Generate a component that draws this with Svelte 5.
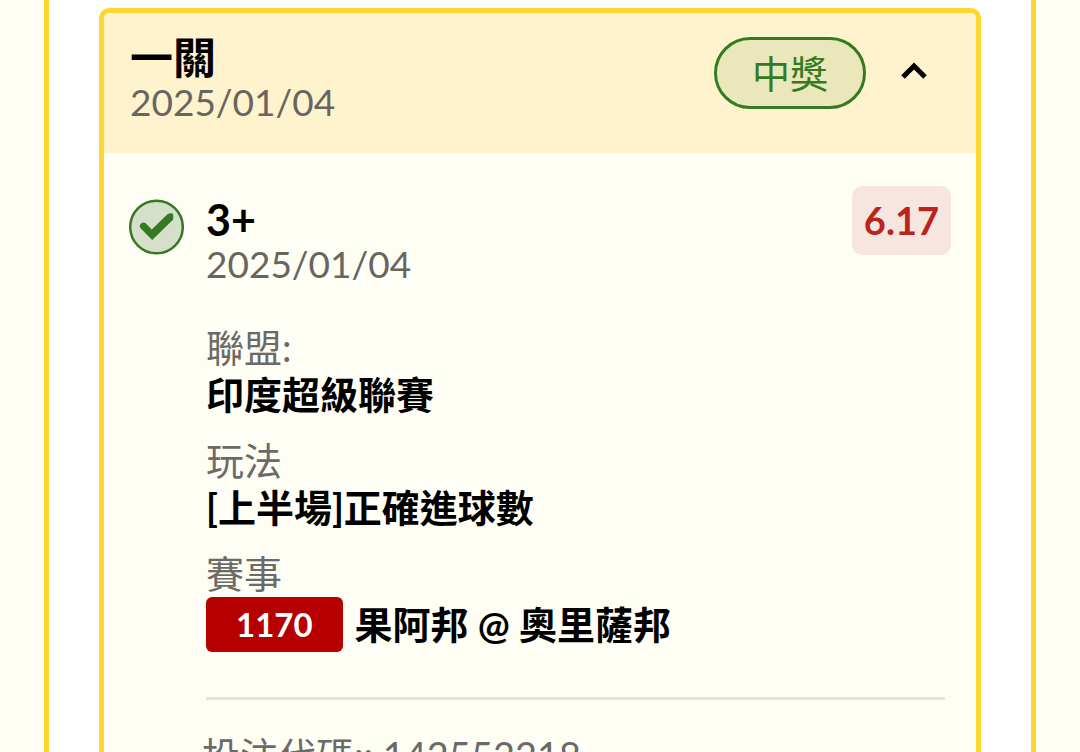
<script>
  let open = $state(true);

  const date = '2025/01/04';
  const details = [
    { label: '聯盟:', value: '印度超級聯賽' },
    { label: '玩法', value: '[上半場]正確進球數' },
    { label: '賽事', value: '果阿邦 @ 奧里薩邦', code: '1170' }
  ];
</script>

<main class="page">
  <section class="panel">
    <article class="card">
      <header class="head">
        <div class="titles">
          <h1>一關</h1>
          <time class="date" datetime="2025-01-04">{date}</time>
        </div>
        <span class="status">中獎</span>
        <button class="toggle" aria-label="一關" aria-expanded={open} onclick={() => (open = !open)}>
          <svg class:closed={!open} viewBox="0 0 30 24" width="30" height="24" aria-hidden="true">
            <path d="M4 18 L15 7 L26 18" fill="none" stroke="#000" stroke-width="5" />
          </svg>
        </button>
      </header>

      {#if open}
        <div class="body">
          <svg class="check" viewBox="0 0 56 56" width="56" height="56" aria-hidden="true">
            <circle cx="28.5" cy="28" r="26.3" fill="#d5dfc9" stroke="#347a22" stroke-width="2.5" />
            <path
              d="M12.8 29.6 Q10.6 27 12.8 24.8 Q15.6 22.4 18.2 24.8 L23.8 30.6 L39.2 15.6 Q42 13.4 45.2 14.8 L45.2 20.6 L24.2 41 Z"
              fill="#347a22"
            />
          </svg>
          <div class="content">
            <div class="pick">
              <div class="titles">
                <h2>3+</h2>
                <time class="date" datetime="2025-01-04">{date}</time>
              </div>
              <span class="odds">6.17</span>
            </div>
            <dl>
              {#each details as item}
                <div class="item">
                  <dt>{item.label}</dt>
                  <dd>
                    {#if item.code}<span class="code">{item.code}</span>{/if}
                    <span>{item.value}</span>
                  </dd>
                </div>
              {/each}
            </dl>
            <hr />
          </div>
        </div>
        <p class="slip">投注代碼:: 142552218</p>
      {/if}
    </article>
  </section>
</main>

<style>
  :global(body) {
    background: #fffef5;
  }
  .page {
    box-sizing: border-box;
    height: 100vh;
    overflow: hidden;
    padding: 0 44px;
    color: #000;
    font-family: Lato, 'Noto Sans CJK TC', sans-serif;
    font-size: 38px;
    line-height: 47px;
  }
  .panel {
    box-sizing: border-box;
    min-height: 100%;
    padding: 8px 50px;
    border: solid #fcd730;
    border-width: 0 5px;
    background: #fff;
  }
  .card {
    border: 5px solid #fcd730;
    border-radius: 10px;
    background: #fffef5;
    overflow: hidden;
  }
  .head {
    display: flex;
    align-items: flex-start;
    padding: 24px 42px 28px 26px;
    background: #fff3cd;
  }
  .titles {
    flex: 1;
    display: flex;
    flex-direction: column;
  }
  h1,
  h2 {
    margin: 0;
    font-size: 43px;
    font-weight: 700;
    line-height: 42px;
  }
  .date {
    color: #686560;
    font-size: 37px;
    line-height: 46px;
  }
  .status {
    box-sizing: border-box;
    padding: 10px 35px;
    border: 3px solid #347a22;
    border-radius: 36px;
    background: #eae7ba;
    color: #347a22;
    line-height: 46px;
  }
  .toggle {
    display: flex;
    margin: 17px 0 0 28px;
    padding: 5px;
    border: 0;
    background: none;
    cursor: pointer;
  }
  .closed {
    transform: rotate(180deg);
  }
  .body {
    display: flex;
    gap: 22px;
    padding: 33px 25px 0 24px;
  }
  .check {
    flex: none;
    margin-top: 13px;
  }
  .content {
    flex: 1;
  }
  .pick {
    display: flex;
    align-items: flex-start;
  }
  .pick .titles {
    padding-top: 13px;
  }
  .odds {
    padding: 11px 12px;
    border-radius: 10px;
    background: #f7e6df;
    color: #b9241d;
    font-weight: 700;
  }
  dl {
    display: flex;
    flex-direction: column;
    gap: 19px;
    margin: 37px 0 0;
  }
  dt {
    color: #6c6a66;
  }
  dd {
    display: flex;
    align-items: center;
    gap: 12px;
    margin: 0;
    font-weight: 700;
  }
  .code {
    padding: 4px 30px;
    border-radius: 6px;
    background: #b60000;
    color: #fff;
    font-size: 33px;
  }
  hr {
    height: 3px;
    margin: 45px 6px 0 0;
    border: 0;
    background: #e6e4df;
  }
  .slip {
    margin: 32px 0 0 98px;
    color: #6c6a66;
  }
</style>
